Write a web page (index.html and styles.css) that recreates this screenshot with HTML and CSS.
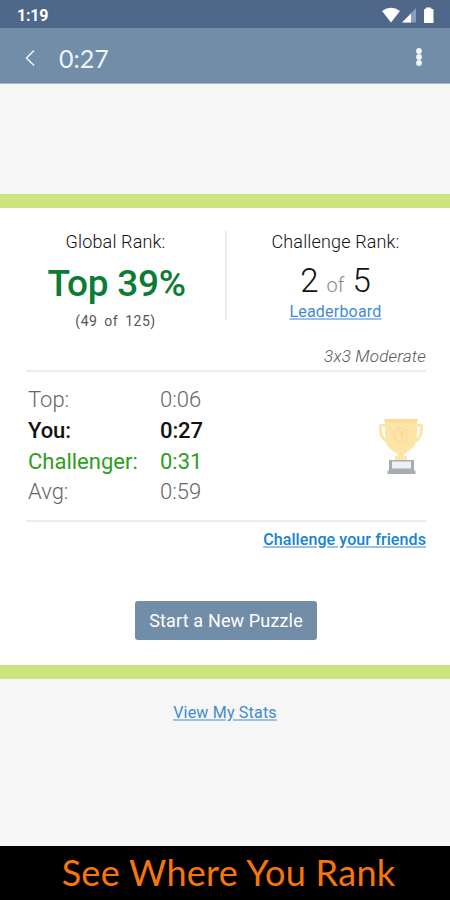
FILE: index.html
```
<!DOCTYPE html>
<html lang="en">
<head>
    <meta charset="UTF-8">
    <meta name="viewport" content="width=device-width, initial-scale=1.0">
    <title>Puzzle Results</title>
    <link rel="stylesheet" href="styles.css">
</head>
<body>
    <div class="status-bar">
        <span class="clock">1:19</span>
        <svg class="status-icons" width="54" height="18" viewBox="0 0 54 18">
            <path d="M1 5 Q10 -1.500 19 5 L10 16.500 Z" fill="#fff"/>
            <path d="M21 16.500 L35 2 V16.500 Z" fill="#8d9cb8"/>
            <path d="M21 16.500 L30 7.500 V16.500 Z" fill="#fff"/>
            <path d="M43 3.500 L45 2.500 V1.500 H50 V2.500 L52.500 3.500 V17 H43 Z" fill="#fff"/>
        </svg>
    </div>
    <header class="toolbar">
        <svg class="back" width="12" height="18" viewBox="0 0 12 18">
            <path d="M10 1.500 L2.500 9 L10 16.500" fill="none" stroke="#e8f0f6" stroke-width="1.700"/>
        </svg>
        <h1 class="timer">0:27</h1>
        <svg class="menu" width="8" height="20" viewBox="0 0 8 20">
            <g fill="#f0f5f8">
                <circle cx="4" cy="3" r="2.900"/>
                <circle cx="4" cy="9" r="2.900"/>
                <circle cx="4" cy="15" r="2.900"/>
            </g>
        </svg>
    </header>

    <main class="card">
        <div class="ranks">
            <div class="rank global">
                <div class="rank-label"><span>Global Rank:</span></div>
                <div class="percent"><span>Top 39%</span></div>
                <div class="count"><span>(49 of 125)</span></div>
            </div>
            <div class="rank challenge">
                <div class="rank-label"><span>Challenge Rank:</span></div>
                <div class="place"><span>2 <small>of</small> 5</span></div>
                <a class="leaderboard" href="#">Leaderboard</a>
            </div>
        </div>
        <div class="difficulty"><span>3x3 Moderate</span></div>
        <div class="results">
            <dl class="times">
                <dt>Top:</dt><dd>0:06</dd>
                <dt class="you">You:</dt><dd class="you">0:27</dd>
                <dt class="challenger">Challenger:</dt><dd class="challenger">0:31</dd>
                <dt>Avg:</dt><dd>0:59</dd>
            </dl>
            <svg class="trophy" width="48" height="58" viewBox="0 0 48 58">
                <path d="M9 7.500 H2.500 V12 Q2.500 21 11 24 M37 7.500 H43.500 V12 Q43.500 21 35 24" fill="none" stroke="#fde5a9" stroke-width="3"/>
                <path d="M7 2 H39 V17 Q39 28 31 33 L26 36 V38 H29 V42 H17 V38 H20 V36 L15 33 Q7 28 7 17 Z" fill="#fee4a6"/>
                <path d="M6 1 H40 L39 4.500 H7 Z" fill="#fcdd96"/>
                <circle cx="23" cy="17" r="7" fill="none" stroke="#fcdc98" stroke-width="1.500"/>
                <path d="M21.500 15 L24 13.500 V20" fill="none" stroke="#f9d484" stroke-width="1.300"/>
                <path d="M11 42 H36 V53 H11 Z" fill="#a6acb3"/>
                <path d="M14 43.500 H33 V50.500 H14 Z" fill="#edf0f4"/>
                <path d="M9.500 52.500 H37.500 V56 H9.500 Z" fill="#a6acb3"/>
            </svg>
        </div>
        <div class="share"><a href="#">Challenge your friends</a></div>
        <button class="new-puzzle" type="button"><span>Start a New Puzzle</span></button>
    </main>

    <div class="stats"><a href="#">View My Stats</a></div>
    <footer class="caption"><span>See Where You Rank</span></footer>
</body>
</html>
```

FILE: styles.css
```
* {
    box-sizing: border-box;
}
body {
    margin: 0;
    height: 900px;
    display: flex;
    flex-direction: column;
    background-color: #f6f6f6;
    color: #111;
    font-family: Roboto, sans-serif;
}
a {
    color: #3f8bd0;
    text-decoration: underline;
    text-decoration-color: #9dbfe8;
    text-decoration-thickness: 2px;
    text-underline-offset: 1px;
}
.status-bar {
    height: 28px;
    padding: 1px 15px 0 17px;
    display: flex;
    justify-content: space-between;
    align-items: center;
    background-color: #4f6788;
    color: #fff;
}
.clock {
    padding-top: 2px;
    font-size: 16px;
    font-weight: bold;
    letter-spacing: -0.2px;
}
.toolbar {
    height: 56px;
    padding: 4px 27px 0 24px;
    display: flex;
    align-items: center;
    background-color: #718da8;
    border-bottom: 1px solid #a9b9c8;
}
.timer {
    flex: 1;
    margin: 0 0 0 23px;
    color: #edf4f8;
    font-family: Lato, sans-serif;
    font-size: 25px;
    font-weight: normal;
}
.card {
    height: 485px;
    margin-top: 110px;
    padding: 23px 24px 0 26px;
    background-color: #fff;
    border-top: 14px solid #cbe480;
    border-bottom: 14px solid #cbe480;
}
.ranks {
    display: flex;
    height: 89px;
}
.rank {
    width: 200px;
    text-align: center;
}
.global {
    width: 201px;
    padding-right: 20px;
    border-right: 2px solid #ececec;
}
.challenge {
    width: 199px;
    padding-left: 18px;
}
.rank-label {
    font-size: 18px;
    font-weight: 300;
    line-height: 22px;
    letter-spacing: 0.15px;
}
.percent {
    padding-left: 2px;
    color: #0c7c34;
    font-size: 37px;
    font-weight: 500;
    line-height: 62px;
    letter-spacing: -0.3px;
}
.count {
    margin-top: -4px;
    font-size: 14px;
    line-height: 20px;
    letter-spacing: 0.5px;
    word-spacing: 3px;
    color: #555;
}
.place {
    font-size: 33px;
    font-weight: 300;
    line-height: 40px;
    margin-top: 8px;
}
.place small {
    color: #888;
    font-size: 20px;
}
.leaderboard {
    display: block;
    margin-top: -3px;
    font-size: 16px;
    line-height: 20px;
    letter-spacing: 0.2px;
}
.difficulty {
    height: 52px;
    padding-top: 26px;
    border-bottom: 2px solid #ececec;
    text-align: right;
    font-size: 17px;
    font-style: italic;
    font-weight: 300;
    line-height: 20px;
    letter-spacing: 0.2px;
    color: #555;
}
.results {
    height: 150px;
    padding: 12px 0 0 2px;
    display: flex;
    justify-content: space-between;
    border-bottom: 2px solid #ececec;
}
.times {
    margin: 0;
    display: grid;
    grid-template-columns: 132px 80px;
    grid-template-rows: 31px 31px 30px 31px;
    font-size: 22px;
    font-weight: 300;
    line-height: 31px;
    color: #666;
}
.times dd {
    margin: 0;
}
.times .you {
    color: #111;
    font-weight: 500;
    letter-spacing: -0.1px;
}
.times .challenger {
    color: #2f9d21;
    font-weight: 400;
}
.trophy {
    margin-top: 34px;
}
.share {
    text-align: right;
    font-size: 16px;
    line-height: 20px;
    padding-top: 8px;
}
.share a {
    color: #1684cc;
    font-weight: 500;
    letter-spacing: 0.1px;
}
.new-puzzle {
    display: block;
    width: 182px;
    height: 39px;
    margin: 51px auto 0 109px;
    padding: 0 0 1px;
    border: none;
    border-radius: 3px;
    background-color: #718da8;
    color: #fff;
    font-family: Roboto, sans-serif;
    font-size: 18px;
    letter-spacing: 0.15px;
}
.stats {
    flex: 1;
    padding-top: 24px;
    text-align: center;
    font-size: 16px;
    line-height: 20px;
    letter-spacing: 0.2px;
}
.caption {
    height: 54px;
    padding-left: 7px;
    background-color: #000;
    color: #f7760c;
    font-family: Lato, sans-serif;
    font-size: 36px;
    line-height: 53px;
    letter-spacing: 0.3px;
    text-align: center;
}
```
